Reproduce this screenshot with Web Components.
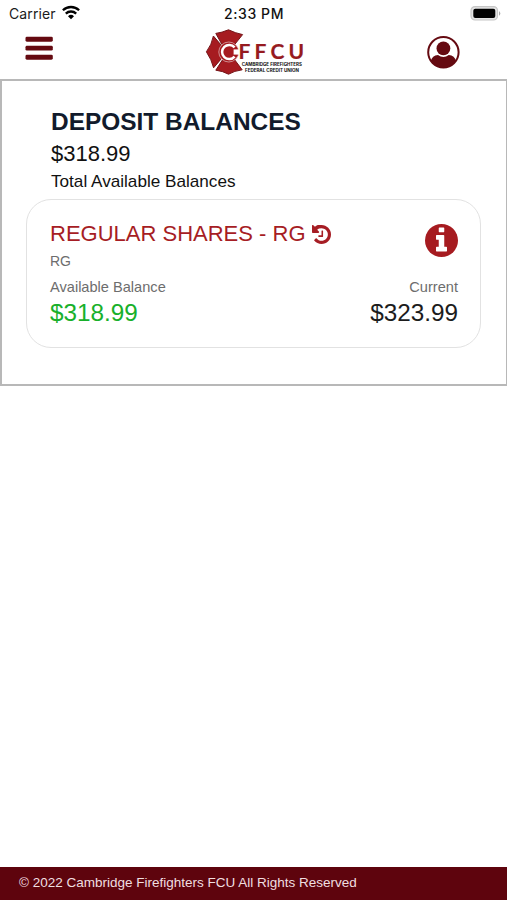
<!DOCTYPE html>
<html lang="en"><head><meta charset="utf-8"><title>CFFCU Balances</title>
<style>
html,body{margin:0;height:100%;background:#fff;font-family:"Liberation Sans",Arial,sans-serif;color:#111}
</style></head><body>
<bank-app></bank-app>
<script>
const define=(name,html)=>customElements.define(name,class extends HTMLElement{
  constructor(){super();this.attachShadow({mode:'open'}).innerHTML=html;}
});

define('status-bar',`<style>
:host{display:grid;grid-template-columns:1fr auto 1fr;align-items:center;height:27px;padding:0 6px 0 9px;box-sizing:border-box;font:14px/27px Inter,sans-serif;color:#1b1b1b}
.l{display:flex;align-items:center;gap:6px;letter-spacing:.12px}
.t{font-weight:500;font-size:14px;color:#111;letter-spacing:.6px;margin-right:2px}
.b{justify-self:end;display:flex}svg{display:block}
.l svg{margin-top:-2px}
</style>
<div class="l"><span>Carrier</span><svg width="18" height="15" viewBox="0 0 18 15"><g fill="none" stroke="#000" stroke-width="2.3"><path d="M.9 5.3a11.6 11.6 0 0 1 16.2 0"/><path d="M3.8 8.6a7.5 7.5 0 0 1 10.4 0"/></g><path d="M6 11.2a4.3 4.3 0 0 1 6 0l-3 3z"/></svg></div>
<span class="t">2:33 PM</span>
<svg class="b" width="32" height="16" viewBox="0 0 32 16"><rect x="2" y=".6" width="26.5" height="13.4" rx="4" fill="#e4e4e4" stroke="#c6c6c6" stroke-width="1.2"/><rect x="4.3" y="2.8" width="22" height="9.2" rx="2" fill="#000"/><path d="M30 5q2.6 2.4 0 4.7z" fill="#aaa"/></svg>`);

define('brand-logo',`<style>:host{display:block}svg{display:block}</style>
<svg width="100" height="48" viewBox="205 28 100 48">
<g fill="#a61b20" stroke="#751519" stroke-width="1" stroke-linejoin="round">
<path d="M215.8 33.4Q222 32.6 228.5 29.8Q235 33 242.6 34.6L234.6 44.6H222z"/>
<path d="M213.4 36L221.6 45.6V58.4L213.6 67.8Q211.6 59.6 206.4 51.8Q211.8 44.6 213.4 36z"/>
<path d="M215.8 70.2L222.4 60H234.8L242.2 69.8Q234.4 70.8 228.5 74.2Q222.8 71 215.8 70.2z"/>
</g>
<circle cx="228.8" cy="52" r="10" fill="#a61b20" stroke="#e0bfc0" stroke-width=".7"/>
<path d="M233.6 49.4H240V54.6H233.6z" fill="#fff"/>
<path d="M234.6 47.4A7.1 7.1 0 1 0 234.6 56.6" fill="none" stroke="#fff" stroke-width="2.5"/>
<g font-family="Lato,sans-serif" fill="#961a20" stroke="#961a20" stroke-width=".2">
<text x="238.6" y="59.4" font-size="21" textLength="65.4" lengthAdjust="spacing" font-weight="700">FFCU</text></g>
<g font-family="Inter,sans-serif" font-weight="700" fill="#111">
<text x="241.8" y="66.2" font-size="4.5" textLength="60.2" lengthAdjust="spacingAndGlyphs">CAMBRIDGE FIREFIGHTERS</text>
<text x="245" y="72.3" font-size="4.5" textLength="54" lengthAdjust="spacingAndGlyphs">FEDERAL CREDIT UNION</text></g>
</svg>`);

define('app-header',`<style>
:host{display:grid;grid-template-columns:1fr auto 1fr;height:52px;padding:0 47px 0 25px;box-sizing:border-box}
svg{display:block}.m{margin-top:9px}.u{justify-self:end;margin-top:8px}brand-logo{margin-top:1px;margin-left:25px}
</style>
<svg class="m" width="28" height="25"><g fill="#650a11"><rect x=".5" y=".7" width="27.3" height="5" rx="1.4"/><rect x=".5" y="9.8" width="27.3" height="4.8" rx="1.4"/><rect x=".5" y="18.7" width="27.3" height="5" rx="1.4"/></g></svg>
<brand-logo></brand-logo>
<svg class="u" width="33" height="34" viewBox="0 0 33 34"><defs><clipPath id="c"><circle cx="16.4" cy="17.3" r="15"/></clipPath></defs><circle cx="16.4" cy="17.3" r="15.2" fill="#fff" stroke="#650a11" stroke-width="2"/><g fill="#650a11"><circle cx="16.4" cy="13.4" r="6.9"/><path clip-path="url(#c)" d="M3.6 34v-7.8q1.6-5.6 7.4-6.2 5.4 3.8 10.8 0 5.8.6 7.4 6.2V34z"/></g></svg>`);

define('account-card',`<style>
:host{display:flex;flex-direction:column;box-sizing:border-box;height:149px;border:1.5px solid #e2e2e2;border-radius:25px;padding:20px 22px 0 23px;color:#6d6d6d;font-size:14.6px}
.top,.row{display:flex;justify-content:space-between}.top{height:54px}
h3{margin:0;font-size:22px;line-height:28px;font-weight:400;color:#a61d24;display:flex;align-items:center;gap:6px;white-space:nowrap}
.code{font-size:14px;line-height:18px;margin-top:4px}
svg{display:block}.i{margin-top:4px}
.row{line-height:18px;margin-top:4px}.amt{line-height:28px;font-size:24.3px;margin-top:0;padding-top:3px}
.g{color:#18b02b}.k{color:#1c1c1c}
</style>
<div class="top"><div><h3><slot name="name"></slot><svg width="19" height="19" viewBox="0 128 1536 1536"><path fill="#a61d24" d="M1536 896q0 156-61 298t-164 245-245 164-298 61q-172 0-327-72.500t-264-204.500q-7-10-6.500-22.500t8.500-20.500l137-138q10-9 25-9 16 2 23 12 73 95 179 147t225 52q104 0 198.500-40.500t163.500-109.500 109.500-163.500 40.500-198.500-40.500-198.500-109.500-163.500-163.500-109.500-198.500-40.500q-98 0-188 35.500t-160 101.500l137 138q31 30 14 69-17 40-59 40H64q-26 0-45-19T0 640V192q0-42 40-59 39-17 69 14l130 129q107-101 244.500-156.500T768 128q156 0 298 61t245 164 164 245 61 298zM896 608v448q0 14-9 23t-23 9H544q-14 0-23-9t-9-23v-64q0-14 9-23t23-9h224V608q0-14 9-23t23-9h64q14 0 23 9t9 23z"/></svg></h3><div class="code"><slot name="code"></slot></div></div>
<svg class="i" width="33" height="33" viewBox="0 0 1536 1536"><path fill="#a61b20" fill-rule="evenodd" d="M768 0a768 768 0 1 0 0 1536 768 768 0 1 0 0-1536z"/><path fill="#fff" d="M1024 1248v-160q0-14-9-23t-23-9h-96V544q0-14-9-23t-23-9H544q-14 0-23 9t-9 23v160q0 14 9 23t23 9h96v320h-96q-14 0-23 9t-9 23v160q0 14 9 23t23 9h448q14 0 23-9t9-23zM896 352V192q0-14-9-23t-23-9H672q-14 0-23 9t-9 23v160q0 14 9 23t23 9h192q14 0 23-9t9-23z"/></svg></div>
<div class="row"><span>Available Balance</span><span>Current</span></div>
<div class="row amt"><span class="g"><slot name="available"></slot></span><span class="k"><slot name="current"></slot></span></div>`);

define('balance-panel',`<style>
:host{display:block;box-sizing:border-box;height:307px;border:2px solid #b8b8b8;border-right-width:1.5px;padding:26px 25px 0 24px}
.h{padding-left:25px;height:92px}
h2{margin:0;font-size:24.45px;line-height:30px;color:#121b2c;white-space:nowrap}
.a{font-size:22px;line-height:28px;margin-top:3px}.s{font-size:17.15px;line-height:20px;margin-top:3px}
</style><div class="h"><h2>DEPOSIT BALANCES</h2><div class="a">$318.99</div><div class="s">Total Available Balances</div></div><slot></slot>`);

define('app-footer',`<style>:host{display:block;height:33px;line-height:31px;background:#5e040d;color:#f0dfe0;font-size:13.5px;padding-left:19px;white-space:nowrap}</style><slot></slot>`);

define('bank-app',`<style>:host{display:flex;flex-direction:column;height:900px}app-footer{margin-top:auto}</style>
<status-bar></status-bar><app-header></app-header>
<balance-panel><account-card><span slot="name">REGULAR SHARES - RG</span><span slot="code">RG</span><span slot="available">$318.99</span><span slot="current">$323.99</span></account-card></balance-panel>
<app-footer>© 2022 Cambridge Firefighters FCU All Rights Reserved</app-footer>`);
</script></body></html>
